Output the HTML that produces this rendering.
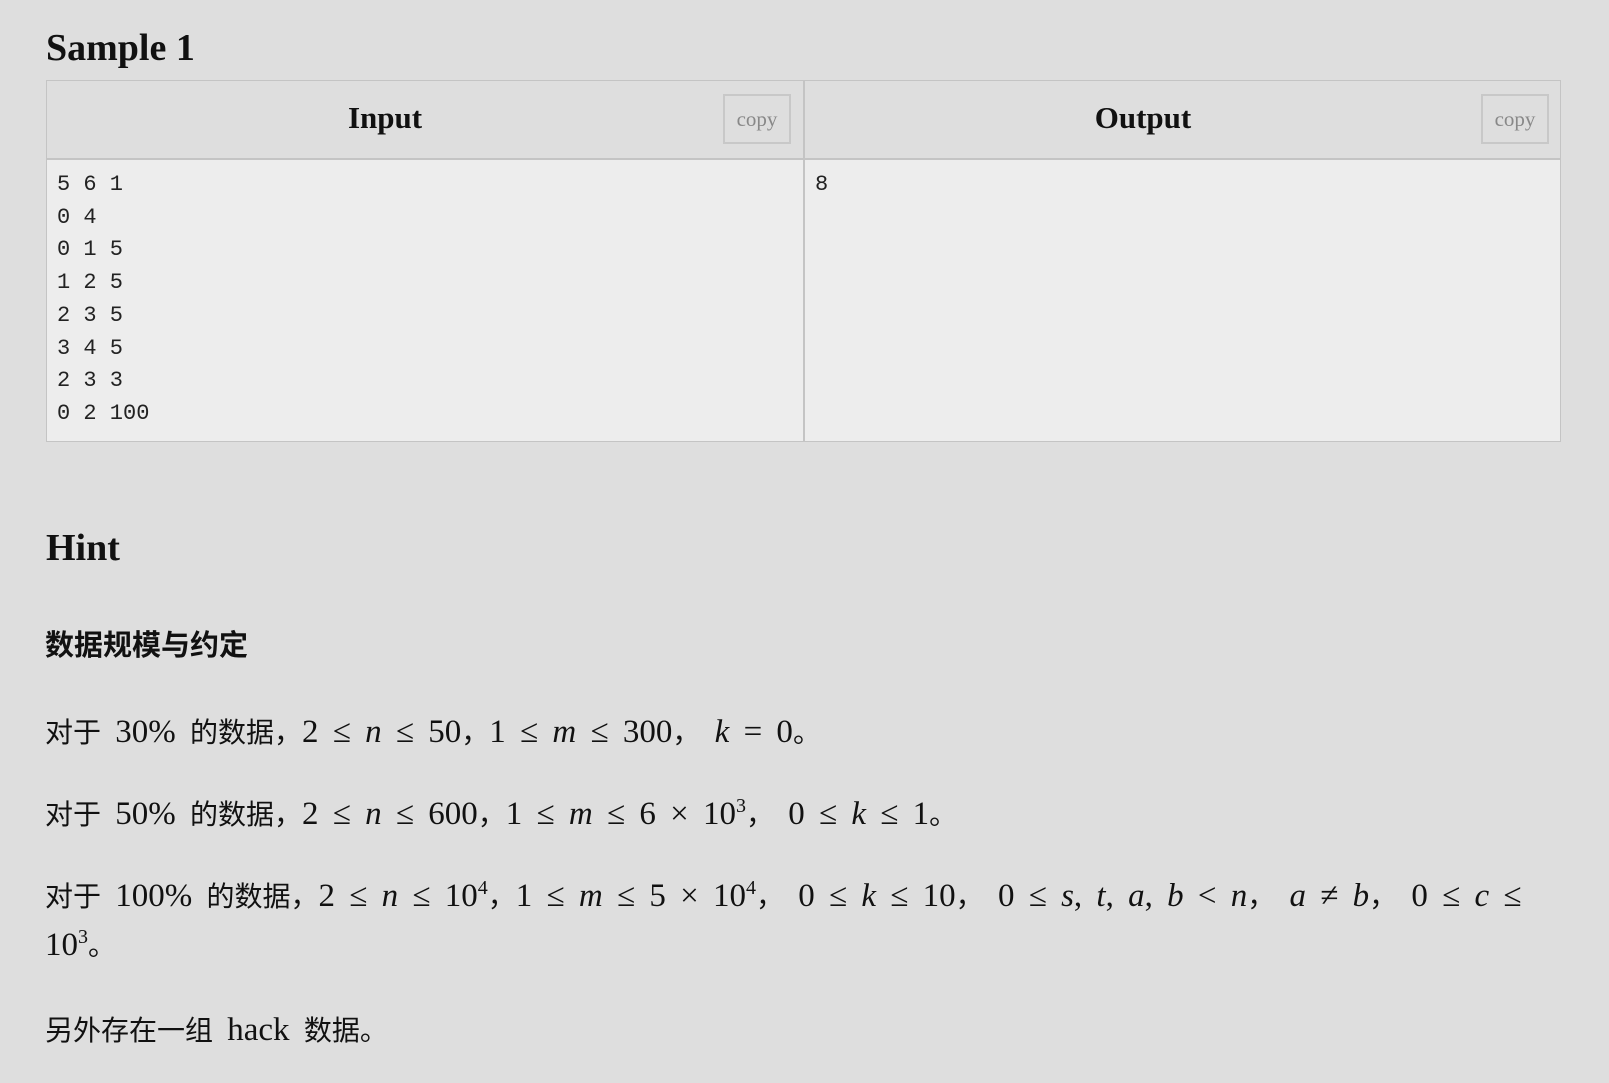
<!DOCTYPE html>
<html><head><meta charset="utf-8"><style>
html,body{margin:0;padding:0;}
body{width:1609px;height:1083px;background:#dedede;position:relative;overflow:hidden;font-family:"Liberation Serif","Noto Serif CJK SC",serif;color:#111;}
.abs{position:absolute;white-space:nowrap;}
.tbl{position:absolute;left:46px;top:80px;width:1515px;height:362px;border:1.5px solid #c4c4c4;box-sizing:border-box;background:#ededed;}
.hdr{position:absolute;left:0;top:0;right:0;height:77px;background:#dedede;border-bottom:2px solid #c4c4c4;}
.div{position:absolute;left:756px;top:0;bottom:0;width:2px;background:#c4c4c4;}
.copy{position:absolute;top:13px;width:68px;height:50px;border:2px solid #c8c8c8;box-sizing:border-box;color:#888;font-size:21px;text-align:center;line-height:46px;}
.ht{position:absolute;top:0;line-height:74px;font-size:31px;font-weight:bold;text-align:center;}
pre{position:absolute;margin:0;font-family:"Liberation Mono","DejaVu Sans Mono",monospace;font-size:22px;line-height:32.7px;color:#222;}
.p{font-family:"Liberation Serif","Noto Sans CJK SC",sans-serif;font-size:33px;word-spacing:6px;}
.cj{font-family:"Noto Sans CJK SC",sans-serif;font-size:28px;word-spacing:0;}
i{font-family:"Liberation Serif",serif;}
sup{font-size:20px;}
</style></head><body>
<div class="abs" style="left:46px;top:26px;font-size:38px;font-weight:bold;">Sample 1</div>
<div class="tbl">
 <div class="hdr">
  <div class="ht" style="left:0;width:676px">Input</div>
  <div class="ht" style="left:758px;width:676px">Output</div>
  <div class="copy" style="left:676px">copy</div>
  <div class="copy" style="left:1434px">copy</div>
 </div>
 <div class="div"></div>
 <pre style="left:10px;top:88px">5 6 1
0 4
0 1 5
1 2 5
2 3 5
3 4 5
2 3 3
0 2 100</pre>
 <pre style="left:768px;top:88px">8</pre>
</div>
<div class="abs" style="left:46px;top:526px;font-size:38px;font-weight:bold;">Hint</div>
<div class="abs" style="left:45px;top:622px;font-family:'Noto Sans CJK SC',sans-serif;font-weight:bold;font-size:29px;">数据规模与约定</div>
<div class="abs p" style="left:45px;top:711px;"><span class="cj">对于</span> 30% <span class="cj">的数据，</span>2 ≤ <i>n</i> ≤ 50<span class="cj">，</span>1 ≤ <i>m</i> ≤ 300<span class="cj">，</span> <i>k</i> = 0<span class="cj">。</span></div>
<div class="abs p" style="left:45px;top:793px;"><span class="cj">对于</span> 50% <span class="cj">的数据，</span>2 ≤ <i>n</i> ≤ 600<span class="cj">，</span>1 ≤ <i>m</i> ≤ 6 × 10<sup>3</sup><span class="cj">，</span> 0 ≤ <i>k</i> ≤ 1<span class="cj">。</span></div>
<div class="abs p" style="left:45px;top:875px;"><span class="cj">对于</span> 100% <span class="cj">的数据，</span>2 ≤ <i>n</i> ≤ 10<sup>4</sup><span class="cj">，</span>1 ≤ <i>m</i> ≤ 5 × 10<sup>4</sup><span class="cj">，</span> 0 ≤ <i>k</i> ≤ 10<span class="cj">，</span> 0 ≤ <i>s</i>, <i>t</i>, <i>a</i>, <i>b</i> &lt; <i>n</i><span class="cj">，</span> <i>a</i> ≠ <i>b</i><span class="cj">，</span> 0 ≤ <i>c</i> ≤</div>
<div class="abs p" style="left:45px;top:924px;">10<sup>3</sup><span class="cj">。</span></div>
<div class="abs p" style="left:45px;top:1009px;"><span class="cj">另外存在一组</span> hack <span class="cj">数据。</span></div>
</body></html>
